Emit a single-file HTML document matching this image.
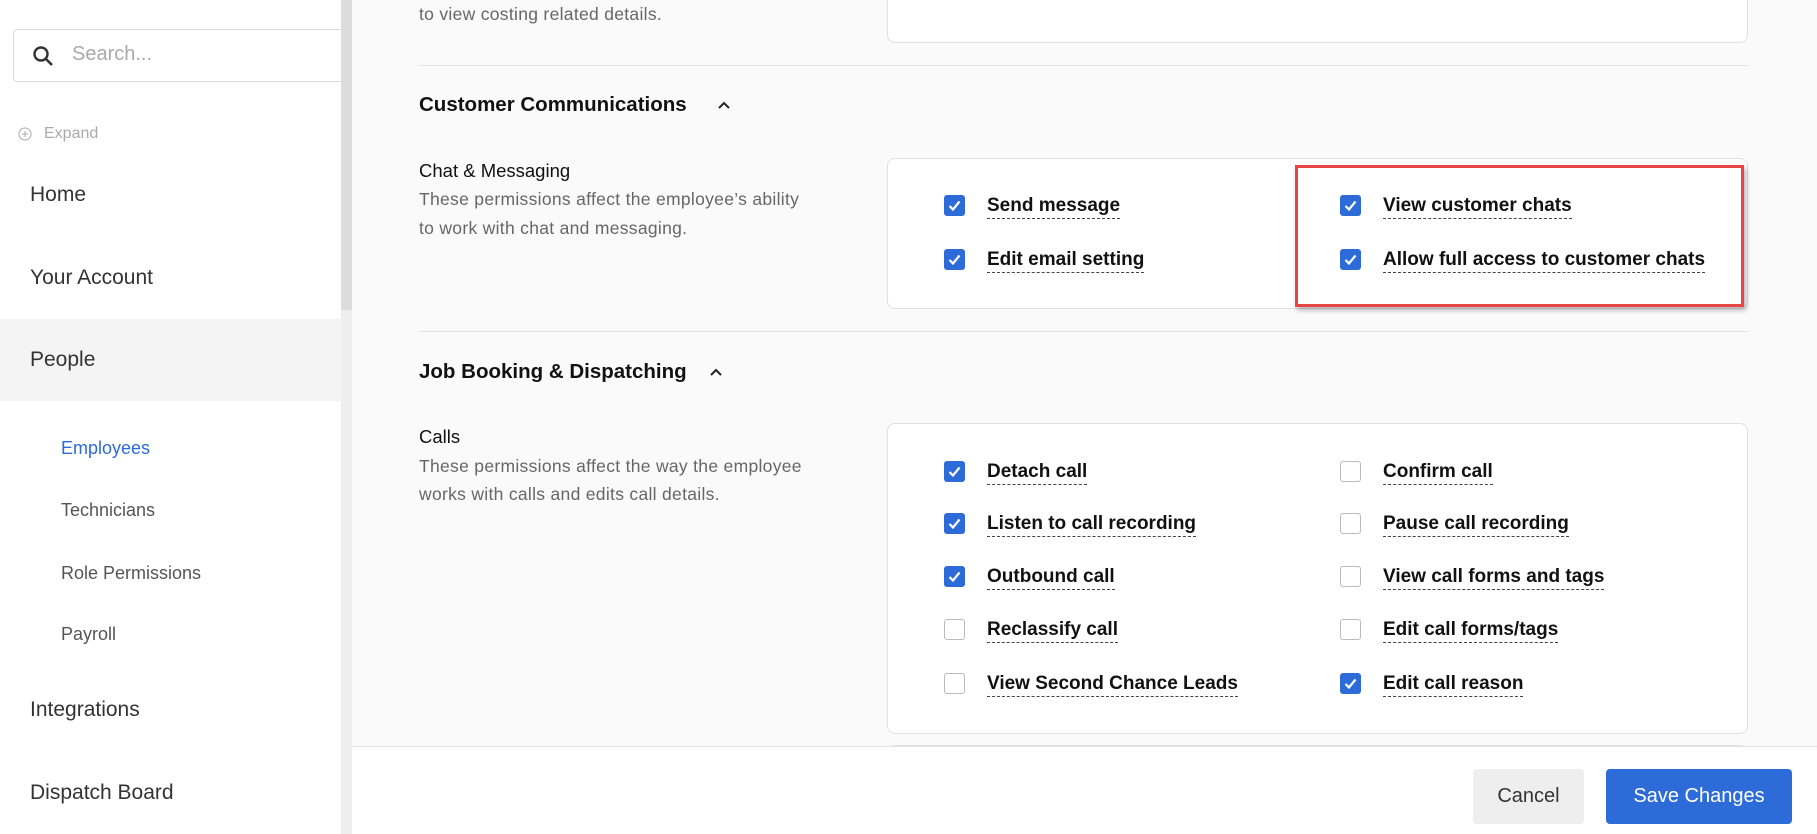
<!DOCTYPE html>
<html><head><meta charset="utf-8"><style>
*{box-sizing:border-box;margin:0;padding:0}
html,body{width:1817px;height:834px;overflow:hidden}
body{background:#fafafa;font-family:"Liberation Sans",sans-serif;position:relative;color:#1f1f1f}
.abs{position:absolute;white-space:nowrap}
#side{position:absolute;left:0;top:0;width:341px;height:834px;background:#fff}
#sb{position:absolute;left:341px;top:0;width:11px;height:834px;background:#eeeeee}
#sbt{position:absolute;left:341px;top:0;width:11px;height:310px;background:#dcdcdc}
.search{left:13px;top:29px;width:328px;height:53px;border:1px solid #ddd;border-right:none;border-radius:4px 0 0 4px;background:#fff}
.nav{font-size:21px;color:#333;left:30px}
.sub{font-size:18px;color:#555;left:61px}
.card{position:absolute;background:#fff;border:1px solid #e0e0e0;border-radius:8px}
.hr{position:absolute;left:419px;width:1329px;height:1px;background:#e2e2e2}
.h{font-weight:bold;font-size:20.5px;color:#111;left:419px}
.t{font-size:18.5px;color:#111;left:419px}
.d{font-size:17.5px;color:#666;left:419px;letter-spacing:0.3px}
.cb{position:absolute;width:21px;height:21px;border-radius:3px;background:#2d6bd8}
.cb.off{background:#fff;border:1px solid #bbb}
.cb svg{position:absolute;left:3px;top:3px}
.lb{position:absolute;font-size:19px;font-weight:bold;color:#111;border-bottom:1.5px dashed #444;padding-bottom:2px;white-space:nowrap;line-height:21px}
</style></head><body>
<div id="side"></div><div id="sb"></div><div id="sbt"></div>
<div class="abs search"></div>
<svg class="abs" style="left:31px;top:44px" width="24" height="24" viewBox="0 0 24 24"><circle cx="10" cy="10" r="6.5" fill="none" stroke="#333" stroke-width="2.4"/><path d="M15 15l6 6" stroke="#333" stroke-width="2.6"/></svg>
<div class="abs" style="left:72px;top:43px;font-size:20px;color:#aaa">Search...</div>
<svg class="abs" style="left:18px;top:127px" width="14" height="14" viewBox="0 0 14 14"><circle cx="7" cy="7" r="6" fill="none" stroke="#aaa"/><path d="M7 4v6M4 7h6" stroke="#aaa"/></svg>
<div class="abs" style="left:44px;top:125px;font-size:16px;color:#aaa">Expand</div>
<div class="abs nav" style="top:183px">Home</div>
<div class="abs nav" style="top:266px">Your Account</div>
<div class="abs" style="left:0;top:319px;width:341px;height:82px;background:#f4f4f4"></div>
<div class="abs nav" style="top:348px">People</div>
<div class="abs sub" style="top:438px;color:#2d6bd8">Employees</div>
<div class="abs sub" style="top:500px">Technicians</div>
<div class="abs sub" style="top:563px">Role Permissions</div>
<div class="abs sub" style="top:624px">Payroll</div>
<div class="abs nav" style="top:698px">Integrations</div>
<div class="abs nav" style="top:781px">Dispatch Board</div>

<div class="card" style="left:887px;top:-10px;width:861px;height:53px"></div>
<div class="abs d" style="top:4px">to view costing related details.</div>
<div class="hr" style="top:65px"></div>
<div class="abs h" style="top:93px">Customer Communications</div>
<svg class="abs" style="left:717px;top:98px" width="14" height="14" viewBox="0 0 14 14"><path d="M2 10l5-5 5 5" fill="none" stroke="#222" stroke-width="2"/></svg>
<div class="abs t" style="top:160px">Chat &amp; Messaging</div>
<div class="abs d" style="top:189px">These permissions affect the employee’s ability</div>
<div class="abs d" style="top:218px">to work with chat and messaging.</div>
<div class="card" style="left:887px;top:158px;width:861px;height:151px"></div>
<div class="hr" style="top:331px"></div>
<div class="abs h" style="top:360px">Job Booking &amp; Dispatching</div>
<svg class="abs" style="left:709px;top:365px" width="14" height="14" viewBox="0 0 14 14"><path d="M2 10l5-5 5 5" fill="none" stroke="#222" stroke-width="2"/></svg>
<div class="abs t" style="top:426px">Calls</div>
<div class="abs d" style="top:456px">These permissions affect the way the employee</div>
<div class="abs d" style="top:484px">works with calls and edits call details.</div>
<div class="card" style="left:887px;top:423px;width:861px;height:311px"></div>
<div class="card" style="left:887px;top:745px;width:861px;height:80px"></div>

<div id="cbs"></div>
<div class="abs" style="left:1295px;top:165px;width:449px;height:142px;border:3px solid #e84545;box-shadow:2px 3px 5px rgba(0,0,0,.3)"></div>

<div class="abs" style="left:352px;top:746px;width:1465px;height:88px;background:#fff;border-top:1px solid #e2e2e2"></div>
<div class="abs" style="left:1473px;top:769px;width:111px;height:55px;background:#eee;border-radius:4px;font-size:20px;color:#333;text-align:center;line-height:55px">Cancel</div>
<div class="abs" style="left:1606px;top:769px;width:186px;height:55px;background:#2d6bd8;border-radius:4px;font-size:20px;color:#fff;text-align:center;line-height:55px">Save Changes</div>
<script>
var items=[[954,206,1,"Send message"],[954,260,1,"Edit email setting"],[1350,206,1,"View customer chats"],[1350,260,1,"Allow full access to customer chats"],
[954,472,1,"Detach call"],[954,524,1,"Listen to call recording"],[954,577,1,"Outbound call"],[954,630,0,"Reclassify call"],[954,684,0,"View Second Chance Leads"],
[1350,472,0,"Confirm call"],[1350,524,0,"Pause call recording"],[1350,577,0,"View call forms and tags"],[1350,630,0,"Edit call forms/tags"],[1350,684,1,"Edit call reason"]];
var h="";items.forEach(function(i){
h+='<div class="cb'+(i[2]?'':' off')+'" style="left:'+(i[0]-10)+'px;top:'+(i[1]-11)+'px">'+(i[2]?'<svg width="15" height="15" viewBox="0 0 15 15"><path d="M2.5 8l3.5 3.5 6.5-8" fill="none" stroke="#fff" stroke-width="2.2"/></svg>':'')+'</div>';
h+='<div class="lb" style="left:'+(i[0]+33)+'px;top:'+(i[1]-11)+'px">'+i[3]+'</div>';});
document.getElementById("cbs").innerHTML=h;
</script>
</body></html>
